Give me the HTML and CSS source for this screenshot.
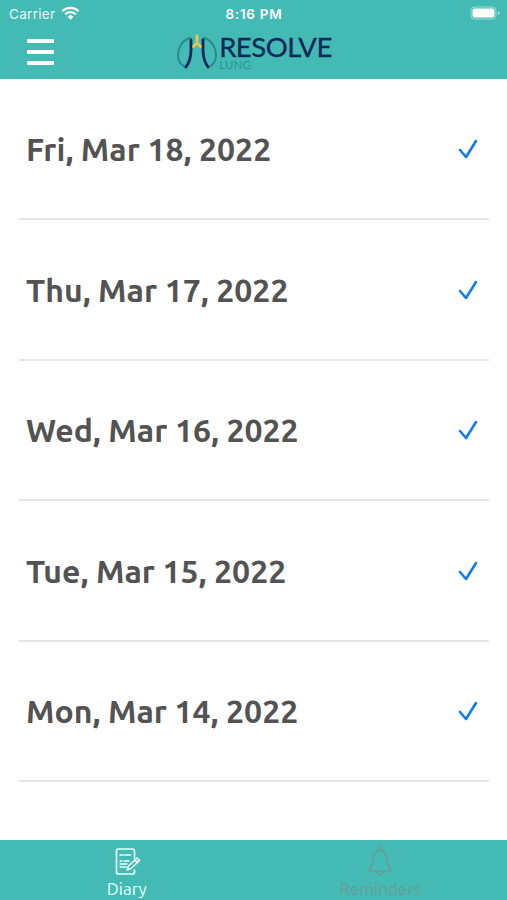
FILE: index.html
```html
<!DOCTYPE html>
<html lang="en">
<head>
    <meta charset="utf-8">
    <title>Resolve Lung</title>
    <link rel="stylesheet" href="styles.css">
</head>
<body>
    <header class="header">
        <div class="status-bar">
            <div class="carrier">
                <span>Carrier</span>
                <svg class="wifi" viewBox="0 0 19 14" width="19" height="14">
                    <path d="M1.3 5.3a11.7 11.7 0 0 1 16.4 0" />
                    <path d="M4.2 8.3a7.5 7.5 0 0 1 10.6 0" />
                    <path class="wifi-dot" d="M6.6 10.8a4.1 4.1 0 0 1 5.8 0l-2.9 3z" />
                </svg>
            </div>
            <span class="time">8:16 PM</span>
            <svg class="battery" viewBox="0 0 31 14" width="31" height="14">
                <rect class="battery-case" x="1" y="1" width="25" height="12" rx="3.5" />
                <rect class="battery-level" x="2.5" y="2.5" width="22" height="9" rx="2" />
                <path class="battery-tip" d="M28 5v4q2-.6 2-2t-2-2z" />
            </svg>
        </div>
        <div class="nav-bar">
            <button class="menu-button" aria-label="Menu">
                <span></span>
                <span></span>
                <span></span>
            </button>
            <div class="logo">
                <svg class="lungs" viewBox="0 0 42 36" width="42" height="36">
                    <path class="lung-outline" d="M14 4C6 6 2 14 2 21c0 6 2.500 10 7.500 12" />
                    <path class="lung-outline" d="M28 4c8 2 12 10 12 17 0 6-2.500 10-7.500 12" />
                    <path class="lung-inner" d="M15 6v10c0 8-1.500 12-5 17" />
                    <path class="lung-inner" d="M27 6v10c0 8 1.500 12 5 17" />
                    <path class="windpipe" d="M21 2v7l-3.500 3.500M21 9l3.500 3.500" />
                </svg>
                <div class="logo-text">
                    <span class="logo-name">RESOLVE</span>
                    <span class="logo-sub">LUNG</span>
                </div>
            </div>
        </div>
    </header>

    <main class="diary-list">
        <div class="entry">
            <span class="date">Fri, Mar 18, 2022</span>
            <svg class="check" viewBox="0 0 20 20" width="20" height="20"><path d="M2 11l6 7L18 2" /></svg>
        </div>
        <div class="entry">
            <span class="date">Thu, Mar 17, 2022</span>
            <svg class="check" viewBox="0 0 20 20" width="20" height="20"><path d="M2 11l6 7L18 2" /></svg>
        </div>
        <div class="entry">
            <span class="date">Wed, Mar 16, 2022</span>
            <svg class="check" viewBox="0 0 20 20" width="20" height="20"><path d="M2 11l6 7L18 2" /></svg>
        </div>
        <div class="entry">
            <span class="date">Tue, Mar 15, 2022</span>
            <svg class="check" viewBox="0 0 20 20" width="20" height="20"><path d="M2 11l6 7L18 2" /></svg>
        </div>
        <div class="entry">
            <span class="date">Mon, Mar 14, 2022</span>
            <svg class="check" viewBox="0 0 20 20" width="20" height="20"><path d="M2 11l6 7L18 2" /></svg>
        </div>
    </main>

    <nav class="tab-bar">
        <a class="tab active">
            <svg viewBox="0 0 28 28" width="28" height="28">
                <path d="M21.500 11V4q0-2-2-2h-14q-2 0-2 2v21q0 2 2 2h14q2 0 2-2v-2" />
                <path class="lines" d="M7 8h3M11.500 8h6M7 14h2M11 14h5M7 17h7M7 20h6" />
                <path d="M14 23l1.500-4L24 11l2.500 2.500-8.500 8zM22 13l2.500 2.500" />
            </svg>
            <span>Diary</span>
        </a>
        <a class="tab">
            <svg viewBox="0 0 28 28" width="28" height="28">
                <path d="M2 24c3-2 4-5 4.500-10C7 7 9 3.500 14 3.500s7 3.500 7.500 10.500c.5 5 1.500 8 4.500 10z" />
                <path d="M12 3.500q0-3 2-3t2 3M10.500 24.500q1 3 3.500 3t3.500-3" />
            </svg>
            <span>Reminders</span>
        </a>
    </nav>
</body>
</html>
```

FILE: styles.css
```css
* {
    box-sizing: border-box;
}

body {
    margin: 0;
    height: 900px;
    display: flex;
    flex-direction: column;
    overflow: hidden;
    background-color: #fff;
    font-family: "Ubuntu", "Noto Sans", sans-serif;
}

svg {
    display: block;
    flex: none;
    fill: none;
    stroke-linecap: round;
    stroke-linejoin: round;
}

.header {
    height: 79px;
    flex: none;
    background-color: #43bbb4;
}

.status-bar {
    display: grid;
    grid-template-columns: 1fr auto 1fr;
    align-items: center;
    height: 27px;
    padding: 0 6px 0 9px;
    color: #fff;
    font-family: Inter, sans-serif;
    font-size: 13.5px;
}

.carrier {
    display: flex;
    align-items: center;
    gap: 6px;
    color: #e4f7f5;
    letter-spacing: 0.3px;
}

.wifi {
    margin-top: -2px;
    stroke: #fff;
    stroke-width: 2.2;
    stroke-linecap: butt;
}

.wifi-dot {
    fill: #fff;
    stroke: none;
}

.time {
    margin-right: 2px;
    font-size: 13.5px;
    font-weight: 600;
    letter-spacing: 0.7px;
}

.battery {
    justify-self: end;
    margin-top: -1px;
}

.battery-case {
    stroke: #9bdcd7;
}

.battery-level {
    fill: #fff;
}

.battery-tip {
    fill: #9bdcd7;
}

.nav-bar {
    display: grid;
    grid-template-columns: 1fr auto 1fr;
    height: 52px;
    padding: 0 26px 0 27px;
}

.menu-button {
    display: flex;
    flex-direction: column;
    gap: 7px;
    width: 27px;
    padding: 12px 0 0;
    border: none;
    background: none;
}

.menu-button span {
    width: 27px;
    height: 4px;
    border-radius: 1px;
    background-color: #fff;
}

.logo {
    display: flex;
    gap: 1px;
    padding-top: 7px;
}

.lung-outline {
    stroke: #278b91;
    stroke-width: 2;
}

.lung-inner {
    stroke: #10275a;
    stroke-width: 2.8;
}

.windpipe {
    stroke: #eec347;
    stroke-width: 2.8;
}

.logo-text {
    display: flex;
    flex-direction: column;
    font-family: Lato, sans-serif;
}

.logo-name {
    height: 26px;
    color: #10275a;
    font-size: 27.5px;
    line-height: 26px;
    letter-spacing: -0.5px;
    -webkit-text-stroke: 0.3px #10275a;
}

.logo-sub {
    color: #2b9496;
    font-size: 11.5px;
    line-height: 10px;
    letter-spacing: 0.3px;
}

.diary-list {
    flex: 1;
    padding: 0.6px 18px 0 19px;
}

.entry {
    display: flex;
    justify-content: space-between;
    align-items: center;
    height: 140.5px;
    padding: 1px 11px 0 7px;
    border-bottom: 2px solid #e6e6e6;
}

.date {
    color: #535353;
    font-size: 32px;
    font-weight: 700;
}

.check {
    stroke: #147ce8;
    stroke-width: 2.6;
}

.tab-bar {
    display: flex;
    flex: none;
    height: 60px;
    background-color: #43bbb4;
}

.tab {
    display: flex;
    flex: 1;
    flex-direction: column;
    align-items: center;
    padding-top: 7px;
    color: #6a9b98;
    font-size: 17px;
    line-height: 28px;
}

.tab svg {
    stroke: currentColor;
    stroke-width: 1.7;
}

.tab .lines {
    stroke-width: 1.4;
}

.tab.active {
    color: #e9fffc;
}
```
